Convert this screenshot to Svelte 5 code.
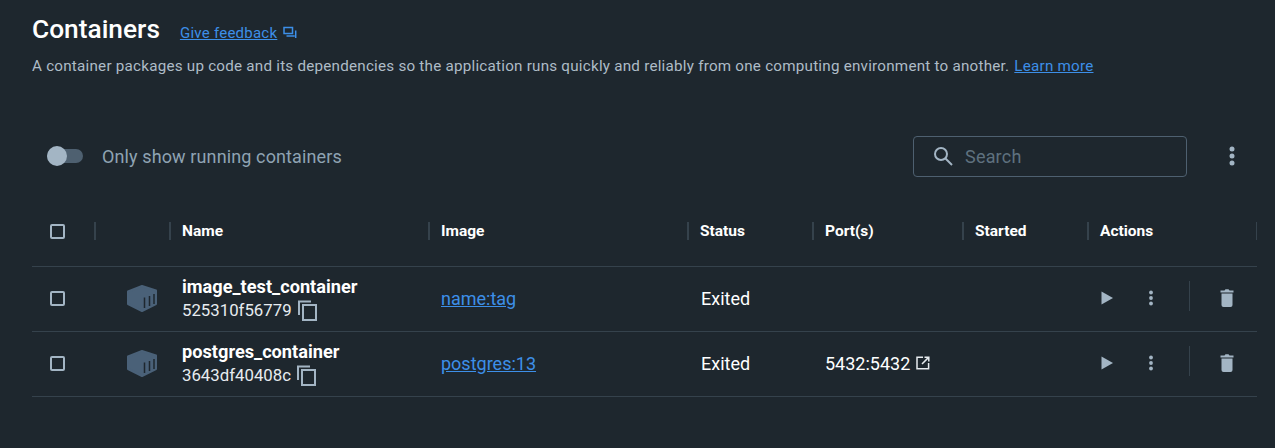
<script>
  const rows = [
    { name: "image_test_container", id: "525310f56779", image: "name:tag", status: "Exited", port: "" },
    { name: "postgres_container", id: "3643df40408c", image: "postgres:13", status: "Exited", port: "5432:5432" },
  ];
  const heads = ["", "", "Name", "Image", "Status", "Port(s)", "Started", "Actions"];
</script>

<style>
  :global(body) {
    background: #1e272e;
  }

  .page {
    height: 448px;
    box-sizing: border-box;
    padding: 14px 18px 0 32px;
    font-family: Roboto, "Liberation Sans", sans-serif;
    color: #fff;
    overflow: hidden;
  }

  .title {
    display: flex;
    align-items: center;
    height: 30px;
  }

  h1 {
    margin: 0 20px 0 0;
    font-size: 26.3px;
    font-weight: 500;
    line-height: 30px;
  }

  a {
    color: #3d8fe8;
    text-decoration: underline;
  }

  .feedback {
    font-size: 15px;
    letter-spacing: 0.25px;
    margin-top: 7px;
  }

  .feedback-icon {
    margin: 7px 0 0 6px;
    color: #3d8fe8;
  }

  .desc {
    margin: 12px 0 0;
    font-size: 15.2px;
    line-height: 20px;
    color: #aebcc7;
    letter-spacing: 0.235px;
  }

  .desc a {
    margin-left: 1px;
  }

  .toolbar {
    display: flex;
    align-items: center;
    height: 42px;
    margin-top: 59px;
    padding-left: 15px;
  }

  .toggle {
    position: relative;
    width: 36px;
    height: 14px;
    border-radius: 7px;
    background: #4e6070;
    margin-right: 19px;
  }

  .knob {
    position: absolute;
    left: 0;
    top: -3px;
    width: 20px;
    height: 20px;
    border-radius: 50%;
    background: #a3b5c4;
  }

  .only {
    flex: 1;
    font-size: 18px;
    letter-spacing: 0.12px;
    color: #8fa3b3;
  }

  .search {
    display: flex;
    align-items: center;
    box-sizing: border-box;
    width: 274px;
    height: 41px;
    border: 1px solid #4e6070;
    border-radius: 4px;
    padding-left: 18px;
    margin-right: 42px;
    font-size: 18px;
    letter-spacing: 0.2px;
    color: #5f717f;
  }

  .search svg {
    margin-right: 11px;
  }

  .more {
    display: flex;
    margin-right: 22px;
  }

  .grid {
    display: grid;
    grid-template-columns: 62px 75px 259px 259px 125px 150px 125px 170px;
    margin-top: 29px;
  }

  .head {
    display: flex;
    align-items: center;
    height: 61px;
    box-sizing: border-box;
    padding-bottom: 11px;
    border-bottom: 1px solid #35424c;
    font-size: 15.5px;
    font-weight: 700;
  }

  .head span {
    display: flex;
    align-items: center;
    height: 18px;
    flex: 1;
    padding-left: 11px;
    border-left: 2px solid #35424c;
  }

  .head.first {
    padding: 0 0 9px 18px;
  }

  .head.last span {
    border-right: 1px solid #35424c;
  }

  .cell {
    display: flex;
    align-items: center;
    height: 65px;
    box-sizing: border-box;
    padding-bottom: 2px;
    border-bottom: 1px solid #35424c;
    font-size: 18px;
  }

  .check {
    padding-left: 18px;
  }

  .box {
    display: block;
    box-sizing: border-box;
    width: 15px;
    height: 15px;
    border: 2px solid #a3b5c4;
    border-radius: 2px;
  }

  .icon {
    padding-left: 33px;
  }

  .namecell {
    flex-direction: column;
    align-items: flex-start;
    justify-content: center;
    padding: 0 0 0 13px;
  }

  .name {
    font-size: 18.2px;
    font-weight: 700;
    line-height: 22px;
  }

  .id {
    display: flex;
    align-items: center;
    font-size: 16.8px;
    line-height: 24px;
    color: #e7ecf0;
  }

  .id svg {
    margin-left: 6px;
  }

  .imagecell,
  .portcell {
    padding-left: 13px;
  }

  .statuscell {
    padding-left: 14px;
  }

  .portcell svg {
    margin-left: 6px;
  }

  .actions {
    padding-left: 14px;
  }

  .actions .play {
    margin-right: 36px;
  }

  .actions .divider {
    width: 1px;
    height: 30px;
    background: #35424c;
    margin: 0 30px 4px 36px;
  }
</style>

<div class="page">
  <div class="title">
    <h1>Containers</h1>
    <a class="feedback" href="#top">Give feedback</a>
    <svg class="feedback-icon" width="14" height="14" viewBox="0 0 14 14" fill="none" stroke="currentColor" stroke-width="1.5">
      <path d="M1 1.5h8.5v6H1z" />
      <path d="M3.5 10h8.2M12.7 4.5v7.5" />
    </svg>
  </div>
  <p class="desc">
    A container packages up code and its dependencies so the application runs quickly and reliably from one computing environment to another. <a href="#top">Learn more</a>
  </p>

  <div class="toolbar">
    <div class="toggle"><div class="knob"></div></div>
    <div class="only">Only show running containers</div>
    <div class="search">
      <svg width="22" height="22" viewBox="0 0 22 22" fill="none" stroke="#a3b5c4" stroke-width="2">
        <circle cx="9" cy="9" r="6" />
        <path d="M13.5 13.5L20 20" />
      </svg>
      Search
    </div>
    <div class="more">
      <svg width="6" height="20" viewBox="0 0 6 20" fill="#a3b5c4">
        <circle cx="3" cy="3" r="2.5" /><circle cx="3" cy="10" r="2.5" /><circle cx="3" cy="17" r="2.5" />
      </svg>
    </div>
  </div>

  <div class="grid">
    {#each heads as h, i}
      {#if i === 0}
        <div class="head first"><i class="box"></i></div>
      {:else}
        <div class="head" class:last={i === heads.length - 1}><span>{h}</span></div>
      {/if}
    {/each}

    {#each rows as r}
      <div class="cell check"><i class="box"></i></div>
      <div class="cell icon">
        <svg width="30" height="27" viewBox="0 0 30 27">
          <path d="M15 1L1 6.5V19L15 26L29 19V5.5Z" fill="#4a6178" stroke="#4a6178" stroke-width="2" stroke-linejoin="round" />
          <path d="M17.5 23V12.5M22.5 21V11M27 19V9" stroke="#1e272e" stroke-width="1.5" />
        </svg>
      </div>
      <div class="cell namecell">
        <div class="name">{r.name}</div>
        <div class="id">
          {r.id}
          <svg width="19" height="21" viewBox="0 0 19 21" fill="none" stroke="#a3b5c4" stroke-width="2">
            <path d="M1 15V1.5H13" />
            <path d="M5 5h13v15H5z" />
          </svg>
        </div>
      </div>
      <div class="cell imagecell"><a href="#top">{r.image}</a></div>
      <div class="cell statuscell">{r.status}</div>
      <div class="cell portcell">
        {#if r.port}
          {r.port}
          <svg width="14" height="14" viewBox="0 0 14 14" fill="none" stroke="#e7ecf0" stroke-width="1.5">
            <path d="M7 1.2H1v11.6h11.6V7" />
            <path d="M8.5 1.2h4.3v4.3M12.6 1.4L6 8" />
          </svg>
        {/if}
      </div>
      <div class="cell"></div>
      <div class="cell actions">
        <svg class="play" width="12" height="14" viewBox="0 0 12 14"><path d="M0.5 0.5L12 7L0.5 13.5Z" fill="#a3b5c4" /></svg>
        <svg width="4" height="16" viewBox="0 0 4 16" fill="#a3b5c4">
          <circle cx="2" cy="2.5" r="1.9" /><circle cx="2" cy="8" r="1.9" /><circle cx="2" cy="13.5" r="1.9" />
        </svg>
        <div class="divider"></div>
        <svg width="14" height="18" viewBox="0 0 14 18" fill="#a3b5c4">
          <path d="M0.5 1.5h4l1-1.3h3l1 1.3h4v2H0.5z" />
          <path d="M1.5 4.5h11v11.5a2 2 0 0 1-2 2h-7a2 2 0 0 1-2-2z" />
        </svg>
      </div>
    {/each}
  </div>
</div>
